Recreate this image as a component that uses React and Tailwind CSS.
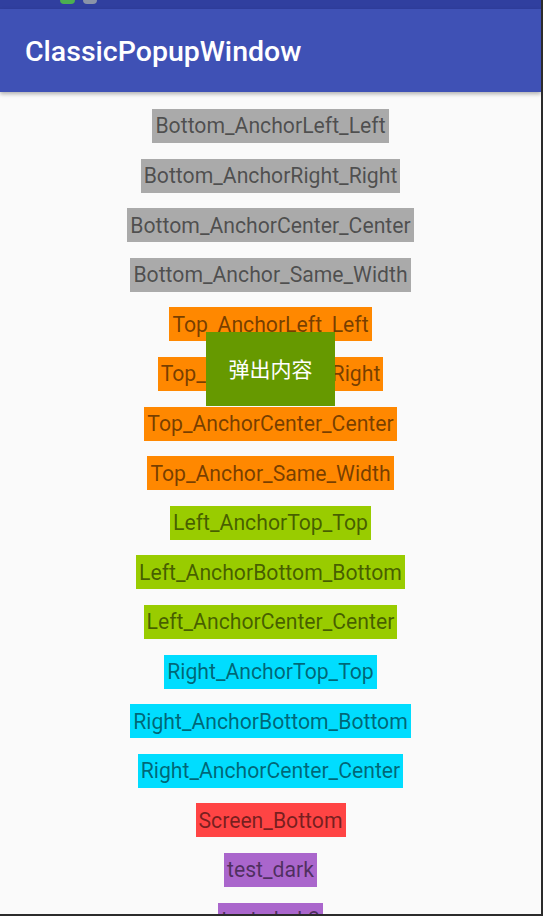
import React from 'react';

const items = [
    { label: 'Bottom_AnchorLeft_Left', color: 'bg-[#aaaaaa]' },
    { label: 'Bottom_AnchorRight_Right', color: 'bg-[#aaaaaa]' },
    { label: 'Bottom_AnchorCenter_Center', color: 'bg-[#aaaaaa]' },
    { label: 'Bottom_Anchor_Same_Width', color: 'bg-[#aaaaaa]' },
    { label: 'Top_AnchorLeft_Left', color: 'bg-[#ff8800]' },
    { label: 'Top_AnchorRight_Right', color: 'bg-[#ff8800]' },
    { label: 'Top_AnchorCenter_Center', color: 'bg-[#ff8800]' },
    { label: 'Top_Anchor_Same_Width', color: 'bg-[#ff8800]' },
    { label: 'Left_AnchorTop_Top', color: 'bg-[#99cc00]' },
    { label: 'Left_AnchorBottom_Bottom', color: 'bg-[#99cc00]' },
    { label: 'Left_AnchorCenter_Center', color: 'bg-[#99cc00]' },
    { label: 'Right_AnchorTop_Top', color: 'bg-[#00ddff]' },
    { label: 'Right_AnchorBottom_Bottom', color: 'bg-[#00ddff]' },
    { label: 'Right_AnchorCenter_Center', color: 'bg-[#00ddff]' },
    { label: 'Screen_Bottom', color: 'bg-[#ff4444]' },
    { label: 'test_dark', color: 'bg-[#aa66cc]' },
    { label: 'test_dark2', color: 'bg-[#aa66cc]' },
];

const App = () => {
    return (
        <div className="relative h-[916px] w-[543px] overflow-hidden bg-[#fafafa] border-r-2 border-b-2 border-[#2b2b2b] font-['Roboto',sans-serif]">
            {/* status bar, mostly cut off */}
            <div className="h-[9px] bg-[#303f9f] flex items-start gap-2 pl-[60px]">
                <div className="w-[15px] h-[4px] bg-[#4caf50] rounded-b-sm" />
                <div className="w-[14px] h-[4px] bg-[#8a93a8] rounded-b-sm" />
            </div>

            {/* app bar */}
            <div className="relative z-10 h-[83px] bg-[#3f51b5] flex items-center pl-[25px] pt-[3px] shadow-[0_2px_4px_rgba(0,0,0,0.3)]">
                <span className="text-white text-[28.5px] font-medium">ClassicPopupWindow</span>
            </div>

            {/* buttons */}
            <div className="flex flex-col items-center gap-[15.6px] pt-[17px]">
                {items.map(item => (
                    <div key={item.label}
                        className={`${item.color} h-[34px] px-[3px] flex items-center text-[21.2px] leading-none text-black/55 whitespace-nowrap`}>
                        {item.label}
                    </div>
                ))}
            </div>

            {/* popup */}
            <div className="absolute left-[206px] top-[332px] w-[129px] h-[74px] bg-[#669900] flex items-center justify-center text-white text-[21px] font-['Noto_Sans_CJK_SC',sans-serif]">
                弹出内容
            </div>
        </div>
    );
};

export default App;
